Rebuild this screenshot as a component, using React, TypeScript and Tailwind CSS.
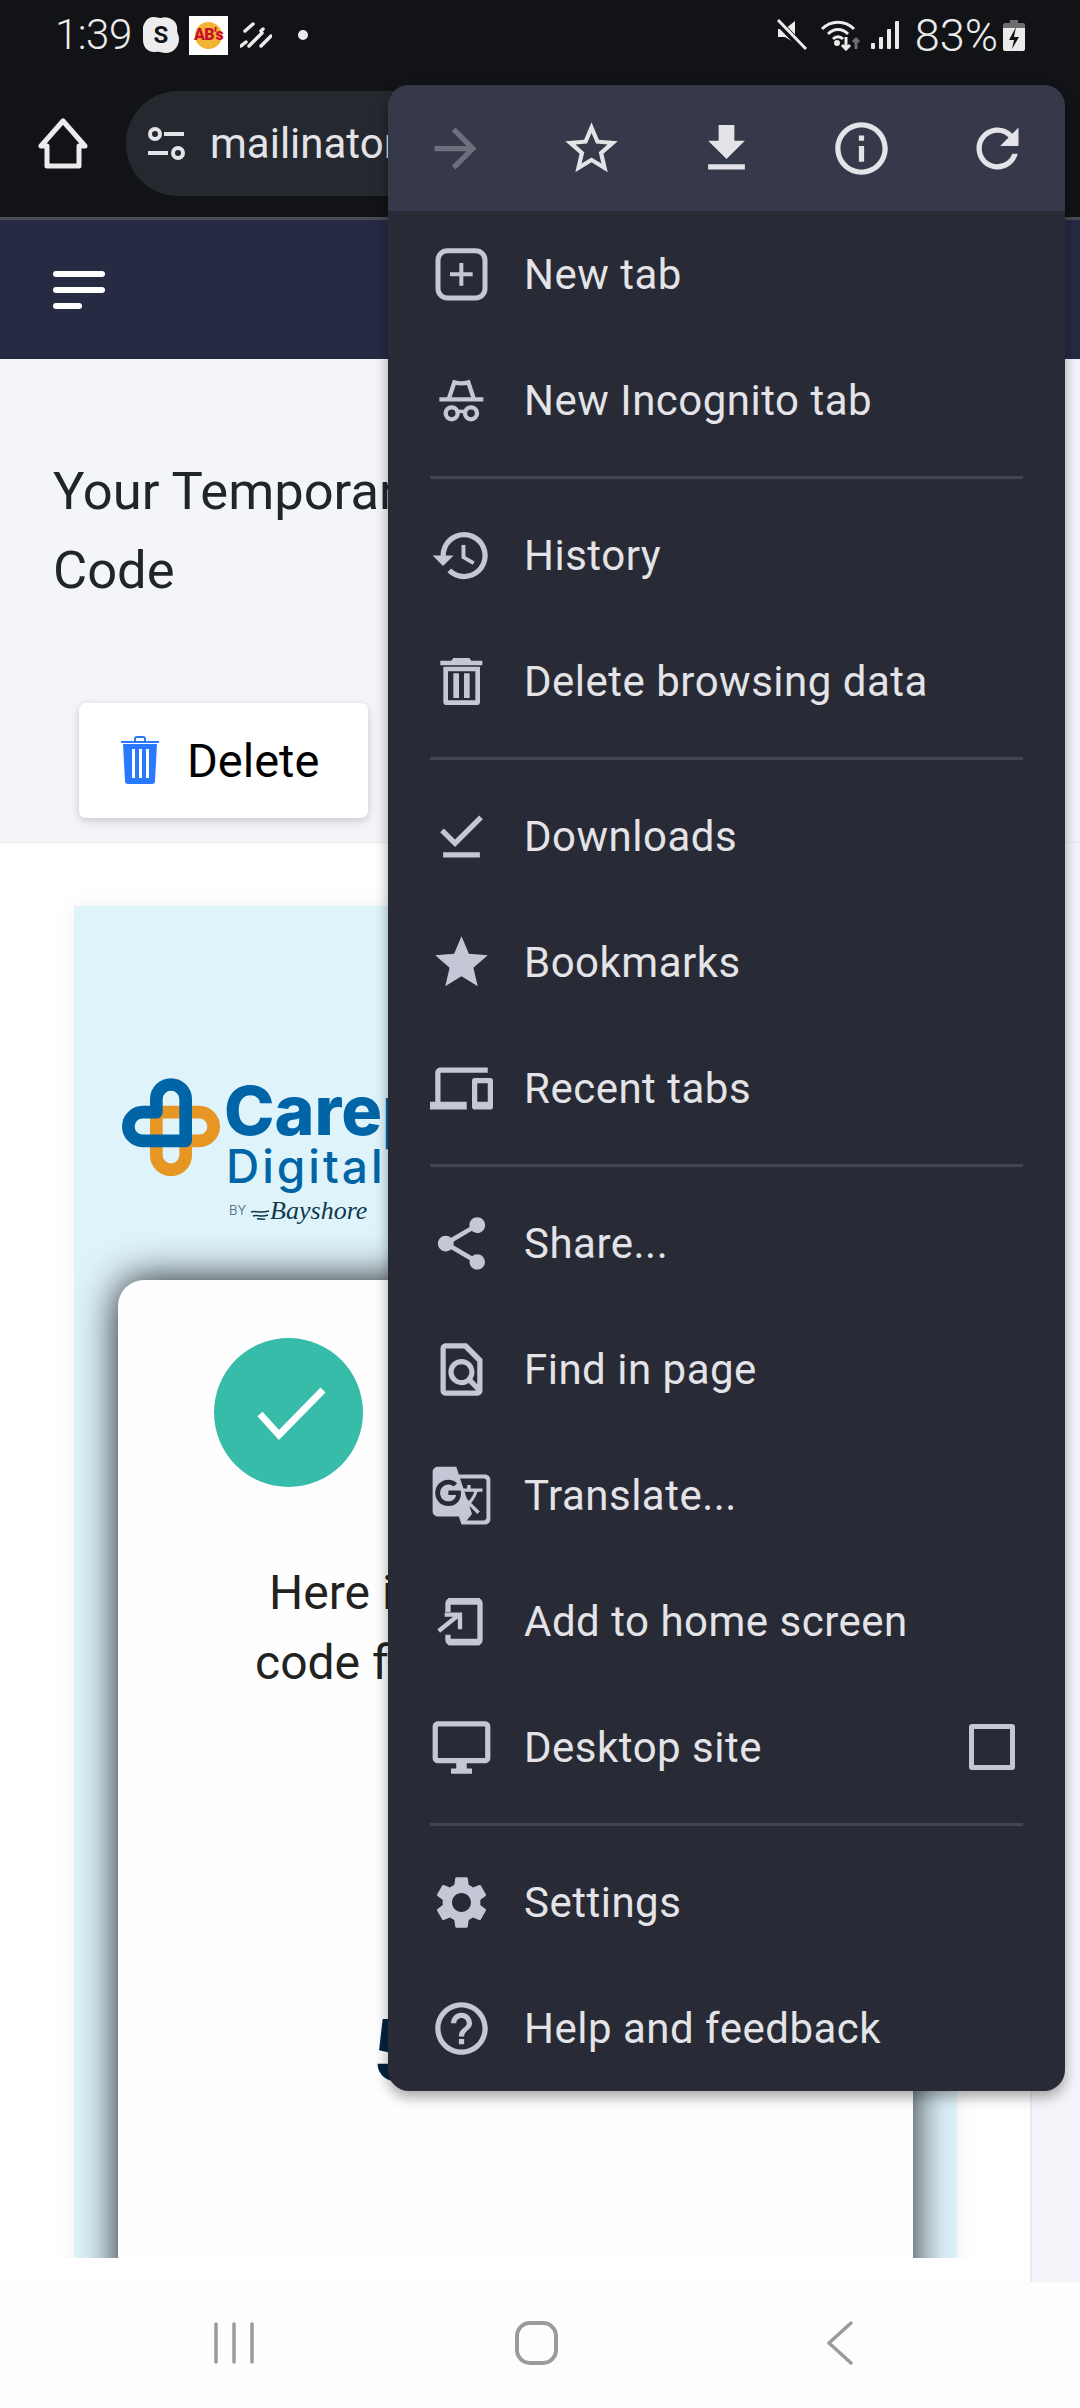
import React from "react";
import {
  MdArrowForward, MdStarBorder, MdFileDownload, MdInfoOutline, MdRefresh, MdHistory, MdDownloadDone,
  MdStar, MdDevices, MdShare, MdOutlineFindInPage, MdGTranslate, MdOutlineDesktopWindows, MdSettings, MdHelpOutline,
} from "react-icons/md";

const NewTabIcon = () => (
  <svg width="63" height="63" viewBox="90 66 189 189" fill="none" stroke="#c4c7d5">
    <rect x="114" y="89" width="141" height="142" rx="28" strokeWidth="15" />
    <path d="M184 126v68M150 160h68" strokeWidth="12" />
  </svg>
);
const IncognitoIcon = () => (
  <svg width="63" height="63" viewBox="90 440 189 189" fill="none" stroke="#c4c7d5">
    <path d="M118 531h132" strokeWidth="13" />
    <path d="M147 528l16-48c14 4 28 4 42 0l16 48" strokeWidth="13" />
    <circle cx="155" cy="573" r="18" strokeWidth="13" />
    <circle cx="213" cy="573" r="18" strokeWidth="13" />
    <path d="M173 570c7-4 15-4 22 0" strokeWidth="10" />
  </svg>
);
const TrashIcon = () => (
  <svg width="63" height="63" viewBox="90 1286 189 189" fill="#c4c7d5">
    <path d="M160 1310h48l6 8h33v14H121v-14h33z" />
    <path fillRule="evenodd" d="M130 1336h110v105a10 10 0 0 1-10 10h-90a10 10 0 0 1-10-10zM144 1350v87h82v-87z" />
    <path d="M160 1356h17v74h-17zM192 1356h17v74h-17z" />
  </svg>
);
const AddHomeIcon = () => (
  <svg width="63" height="63" viewBox="90 396 189 189" fill="none" stroke="#c4c7d5">
    <path d="M144 462v-26a8 8 0 0 1 8-8h80a8 8 0 0 1 8 8v110a8 8 0 0 1-8 8h-80a8 8 0 0 1-8-8v-16" strokeWidth="16" />
    <path d="M116 519l60-48M134 470h46v44" strokeWidth="13" />
    <path d="M144 430h96M144 552h96" strokeWidth="20" />
  </svg>
);

type Row = { label: string; icon: React.ReactNode; check?: boolean };
const c = "#c4c7d5";
const groups: Row[][] = [
  [
    { label: "New tab", icon: <NewTabIcon /> },
    { label: "New Incognito tab", icon: <IncognitoIcon /> },
  ],
  [
    { label: "History", icon: <MdHistory size={63} color={c} /> },
    { label: "Delete browsing data", icon: <TrashIcon /> },
  ],
  [
    { label: "Downloads", icon: <MdDownloadDone size={63} color={c} /> },
    { label: "Bookmarks", icon: <MdStar size={63} color={c} /> },
    { label: "Recent tabs", icon: <MdDevices size={63} color={c} /> },
  ],
  [
    { label: "Share...", icon: <MdShare size={63} color={c} /> },
    { label: "Find in page", icon: <MdOutlineFindInPage size={63} color={c} /> },
    { label: "Translate...", icon: <MdGTranslate size={63} color={c} /> },
    { label: "Add to home screen", icon: <AddHomeIcon /> },
    { label: "Desktop site", icon: <MdOutlineDesktopWindows size={63} color={c} />, check: true },
  ],
  [
    { label: "Settings", icon: <MdSettings size={63} color={c} /> },
    { label: "Help and feedback", icon: <MdHelpOutline size={63} color={c} /> },
  ],
];

function Menu() {
  return (
    <div className="absolute left-[388px] top-[85px] w-[677px] rounded-[21px] overflow-hidden bg-[#282b35] shadow-[0_6px_14px_rgba(0,0,0,0.35)]">
      <div className="h-[126px] bg-[#353949] flex items-center">
        {[
          <MdArrowForward key="a" size={63} color="#6d707d" />,
          <MdStarBorder key="b" size={63} color="#e3e3e8" />,
          <MdFileDownload key="c" size={63} color="#e3e3e8" />,
          <MdInfoOutline key="d" size={63} color="#e3e3e8" />,
          <MdRefresh key="e" size={63} color="#e3e3e8" />,
        ].map((icon) => (
          <div key={icon.key} className="flex-1 flex justify-center">{icon}</div>
        ))}
      </div>
      {groups.map((g, i) => (
        <div key={i}>
          {i > 0 && (
            <div className="h-[29px] flex items-center px-[42px]">
              <div className="h-[3px] w-full bg-[#43464f]" />
            </div>
          )}
          {g.map((r) => (
            <div key={r.label} className="h-[126px] flex items-center pl-[42px] pr-[50px]">
              <div className="w-[63px] h-[63px] shrink-0">{r.icon}</div>
              <div className="ml-[31px] mt-[2px] flex-1 text-[42px] leading-none text-[#e3e3e8] tracking-[0.5px]">{r.label}</div>
              {r.check && <div className="w-[46px] h-[46px] border-[5px] border-[#c4c7d5] rounded-[3px]" />}
            </div>
          ))}
        </div>
      ))}
    </div>
  );
}

function StatusBar() {
  return (
    <div className="h-[70px] flex items-center justify-between pl-[55px] pr-[55px] text-[42px] text-[#ebebeb] font-light">
      <div className="flex items-center">
        <span className="w-[76px] leading-none tracking-[-0.5px]">1:39</span>
        <svg width="36" height="38" viewBox="0 0 36 38" className="ml-[12px]">
          <path d="M10 1c4 0 5 1 8 1 3-1 5-1 8 0 6 2 9 7 8 12 0 3 2 5 2 9 0 8-6 14-13 14-4 0-6-2-10-1-9 1-13-6-13-12 0-4-1-6-1-9C0 8 4 1 10 1z" fill="#ececec" />
          <text x="18" y="27" textAnchor="middle" fontSize="24" fontWeight="700" fill="#121317" fontFamily="Roboto, sans-serif">S</text>
        </svg>
        <div className="ml-[10px] w-[39px] h-[39px] bg-white flex items-center justify-center relative">
          <div className="w-[27px] h-[27px] rounded-full bg-[#f2b233]" />
          <span className="absolute inset-0 flex items-center justify-center text-[16px] font-black text-[#c8102e] tracking-[-0.5px] leading-none">AB's</span>
        </div>
        <svg width="32" height="26" viewBox="0 0 32 26" className="ml-[12px]" stroke="#ebebeb" strokeWidth="3.5" strokeLinecap="round">
          <path d="M5 9l8-7M1 24l5-4M9 24l13-13M21 9l2-2M21 24l10-10" />
        </svg>
        <div className="ml-[26px] w-[10px] h-[10px] rounded-full bg-[#ebebeb]" />
      </div>
      <div className="flex items-center">
        <svg width="32" height="32" viewBox="0 0 32 32" fill="#ebebeb">
          <path d="M2 10h7L19 2v22L9 18H2z" />
          <path d="M2 3l27 28" stroke="#121317" strokeWidth="7" />
          <path d="M2 1l28 29" stroke="#ebebeb" strokeWidth="3" />
        </svg>
        <svg width="42" height="32" viewBox="0 0 42 32" fill="none" stroke="#ebebeb" strokeWidth="3" className="ml-[12px]">
          <path d="M2 10c9-9 23-9 32 0M8 15c6-6 14-6 20 0M13 20c3-3 7-3 10 0" />
          <circle cx="17" cy="24" r="1.5" fill="#ebebeb" />
          <path d="M26 18v12M22 26l4 4 4-4" />
          <path d="M36 30v-10M33 23l3-3 3 3" stroke="#6e6e6e" />
        </svg>
        <svg width="28" height="30" viewBox="0 0 28 30" fill="#ebebeb" className="ml-[9px]">
          <rect x="0" y="23" width="4" height="6" rx="1" />
          <rect x="8" y="17" width="4" height="12" rx="1" />
          <rect x="16" y="9" width="4" height="20" rx="1" />
          <rect x="24" y="1" width="4" height="28" rx="1" />
        </svg>
        <span className="ml-[16px] leading-none text-[45px]">83%</span>
        <svg width="22" height="31" viewBox="0 0 22 31" className="ml-[5px]">
          <path d="M7 0h8v3h5a2 2 0 0 1 2 2v3H0V5a2 2 0 0 1 2-2h5z" fill="#6e6e6e" />
          <path d="M0 8h22v21a2 2 0 0 1-2 2H2a2 2 0 0 1-2-2z" fill="#ebebeb" />
          <path d="M13 7l-7 13h5l-2 9 7-12h-5z" fill="#121317" />
        </svg>
      </div>
    </div>
  );
}

function Toolbar() {
  return (
    <div className="h-[150px] flex items-start border-b-[3px] border-[#4a4c55]">
      <svg width="52" height="52" viewBox="0 0 52 52" fill="none" stroke="#ececec" strokeWidth="5" strokeLinejoin="round" className="ml-[37px] mt-[48px]">
        <path d="M26 3L4 28h6v20h32V28h6z" />
      </svg>
      <div className="ml-[37px] mt-[21px] w-[500px] h-[105px] rounded-l-[52px] bg-[#25282f] flex items-center pl-[22px]">
        <svg width="38" height="34" viewBox="0 0 38 34" fill="none" stroke="#e3e3e8" strokeWidth="4">
          <circle cx="7" cy="7" r="5" />
          <path d="M16 7h20M0 26h20" />
          <circle cx="30" cy="26" r="5" />
        </svg>
        <span className="ml-[24px] text-[42px] leading-none text-[#e3e3e8]">mailinator.com</span>
      </div>
    </div>
  );
}

function Logo() {
  return (
    <div className="flex items-start h-[202px] pl-[48px]">
      <svg width="98" height="98" viewBox="186 235 294 293" fill="none" strokeWidth="38" strokeLinejoin="round">
        <path d="M289 337V466A44 44 0 0 0 377 466V423H418A43 43 0 0 0 418 337Z" stroke="#e59623" />
        <path d="M377 423V298A44 44 0 0 0 289 298V337H248A43 43 0 0 0 248 423Z" stroke="#0065a6" />
      </svg>
      <div className="ml-[6px] flex flex-col text-[#0065a6] whitespace-nowrap">
        <span className="ml-[-2px] text-[68px] font-extrabold leading-[62px] mt-[1px] [font-family:Inter,sans-serif] tracking-[0px]">Carepath</span>
        <span className="text-[46px] font-medium leading-[46px] mt-[2px] [font-family:Inter,sans-serif] tracking-[3px] [word-spacing:-10px]">Digital Health</span>
        <div className="ml-[3px] flex items-center text-[#0d3a4f] mt-[7px]">
          <span className="text-[13px] font-light text-[#3d6072] [font-family:Inter,sans-serif]">BY</span>
          <svg width="20" height="12" viewBox="0 0 20 12" fill="none" stroke="#0d3a4f" strokeWidth="1.5" className="ml-[4px] mt-[6px]">
            <path d="M1 4c4-2 8 2 18-1M3 8c4-2 8 2 15-1M7 11c3-1 5 1 8 0" />
          </svg>
          <span className="text-[26px] italic leading-[30px] [font-family:'Liberation_Serif',serif]">Bayshore</span>
        </div>
      </div>
    </div>
  );
}

export default function App() {
  return (
    <div className="relative w-[1080px] h-[2408px] overflow-hidden bg-white [font-family:Roboto,sans-serif]">
      <div className="bg-[#121317]">
        <StatusBar />
        <Toolbar />
      </div>
      <div className="h-[139px] bg-[#262a43] pl-[53px] pt-[51px] flex flex-col gap-[10px]">
        <div className="w-[52px] h-[6px] rounded-full bg-white" />
        <div className="w-[52px] h-[6px] rounded-full bg-white" />
        <div className="w-[29px] h-[6px] rounded-full bg-white" />
      </div>
      <div className="h-[484px] bg-[#f4f5fa] border-b border-[#e9eaee]">
        <h1 className="pt-[93px] pl-[53px] text-[52.5px] leading-[78.75px] text-[#212529] font-normal whitespace-nowrap">
          Your Temporary Verification<br />Code
        </h1>
        <div className="ml-[79px] mt-[93px] w-[289px] h-[115px] bg-white rounded-[7px] shadow-[0_3px_10px_rgba(0,0,0,0.18)] flex items-center pl-[42px]">
          <svg width="38" height="48" viewBox="0 0 38 48" fill="#2979ff">
            <path d="M13 3c0-2 1-3 3-3h6c2 0 3 1 3 3v2h13v2H0V5h13zm2 0v2h8V3c0-1-.5-1-1-1h-6c-.5 0-1 0-1 1z" />
            <path fillRule="evenodd" d="M2 8h34l-2 37c0 2-1 3-3 3H7c-2 0-3-1-3-3zM11 13v29h3V13zM18 13v29h3V13zM25 13v29h3V13z" />
          </svg>
          <span className="ml-[28px] text-[47px] leading-none text-black">Delete</span>
        </div>
      </div>
      <div className="flex h-[1439px]">
        <div className="w-[1030px] shrink-0">
          <div className="h-[1415px] overflow-hidden pt-[63px]">
            <div className="ml-[74px] w-[883px] h-[1500px] bg-[#dff3fb] pt-[172px] shadow-[0_0_20px_rgba(0,0,0,0.06)]">
              <Logo />
              <div className="ml-[44px] w-[795px] h-[1100px] bg-[#fefefe] rounded-t-[26px] shadow-[0_0_40px_rgba(0,0,0,0.9)] pt-[58px]">
                <div className="ml-[96px] w-[149px] h-[149px] rounded-full bg-[#37bcaa] flex items-center justify-center">
                  <svg width="149" height="149" viewBox="214 1338 149 149" fill="none" stroke="#fff" strokeWidth="7">
                    <path d="M260 1414l19 21 44-45" />
                  </svg>
                </div>
                <p className="mt-[71px] pl-[151px] text-[48px] leading-[70px] text-[#222] whitespace-nowrap">Here is your verification</p>
                <p className="pl-[137px] text-[48px] leading-[70px] text-[#222] whitespace-nowrap">code for your account:</p>
                <p className="mt-[309px] pl-[255px] text-[88px] leading-none font-bold text-[#03233f] whitespace-nowrap">512345</p>
              </div>
            </div>
          </div>
        </div>
        <div className="flex-1 bg-[#f4f5fa] border-l-2 border-[#e9eaee]" />
      </div>
      <div className="h-[126px] bg-[#fdfdfd]">
        <svg width="1080" height="126" viewBox="0 2282 1080 126" fill="none" stroke="#9b9b9b" strokeWidth="3.5" strokeLinecap="round" strokeLinejoin="round">
          <path d="M216 2324v38M234 2324v38M252 2324v38" />
          <rect x="517" y="2323" width="39" height="40" rx="13" strokeWidth="4" />
          <path d="M851 2323l-22 20 22 20" />
        </svg>
      </div>
      <Menu />
    </div>
  );
}
